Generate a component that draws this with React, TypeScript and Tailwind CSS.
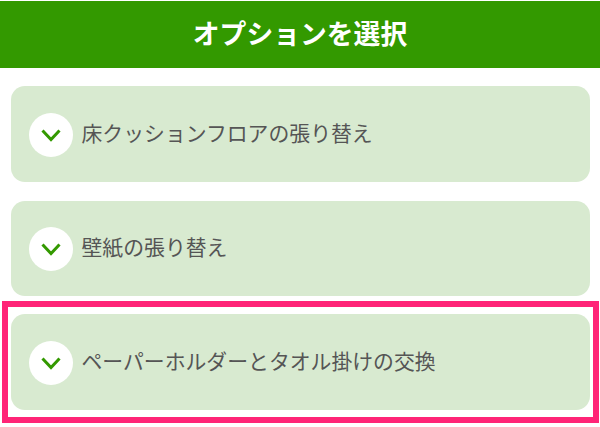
const options = [
  { label: "床クッションフロアの張り替え", height: "h-[96px]" },
  { label: "壁紙の張り替え", height: "h-[95px]" },
  { label: "ペーパーホルダーとタオル掛けの交換", height: "h-[96.5px]", marked: true },
];

function OptionRow({ label, height, marked }: { label: string; height: string; marked?: boolean }) {
  return (
    <div className={`relative ${height} flex items-center gap-[9px] rounded-[14px] bg-[#d8ead0] pl-[18px]`}>
      <span className="mt-[2px] flex size-[44px] shrink-0 items-center justify-center rounded-full bg-white">
        <svg width="22" height="14" viewBox="0 0 22 14" fill="none" aria-hidden="true">
          <path d="M2.5 2.5l8.5 9 8.5-9" stroke="#339900" strokeWidth="3" />
        </svg>
      </span>
      <span className="mb-[3px] text-[20.85px] leading-none text-[#555555]">{label}</span>
      {/* Pink annotation frame */}
      {marked && (
        <div className="pointer-events-none absolute -top-[12.5px] -right-[9.5px] -bottom-[13px] -left-[8.5px] border-[6px] border-[#ff2477]" />
      )}
    </div>
  );
}

export default function App() {
  return (
    <div
      className="h-[427px] w-[600px] overflow-hidden bg-white pt-px"
      style={{ fontFamily: '"Noto Sans CJK JP", "Noto Sans", sans-serif' }}
    >
      <header className="flex h-[67px] items-center justify-center bg-[#339900] pb-[3px] text-[26.8px] font-bold text-white">
        オプションを選択
      </header>
      <div className="flex flex-col px-[10.5px] pt-[18px]">
        <div className="flex flex-col gap-[18.5px]">
          <OptionRow {...options[0]} />
          <OptionRow {...options[1]} />
        </div>
        <div className="mt-[18px]">
          <OptionRow {...options[2]} />
        </div>
      </div>
    </div>
  );
}
